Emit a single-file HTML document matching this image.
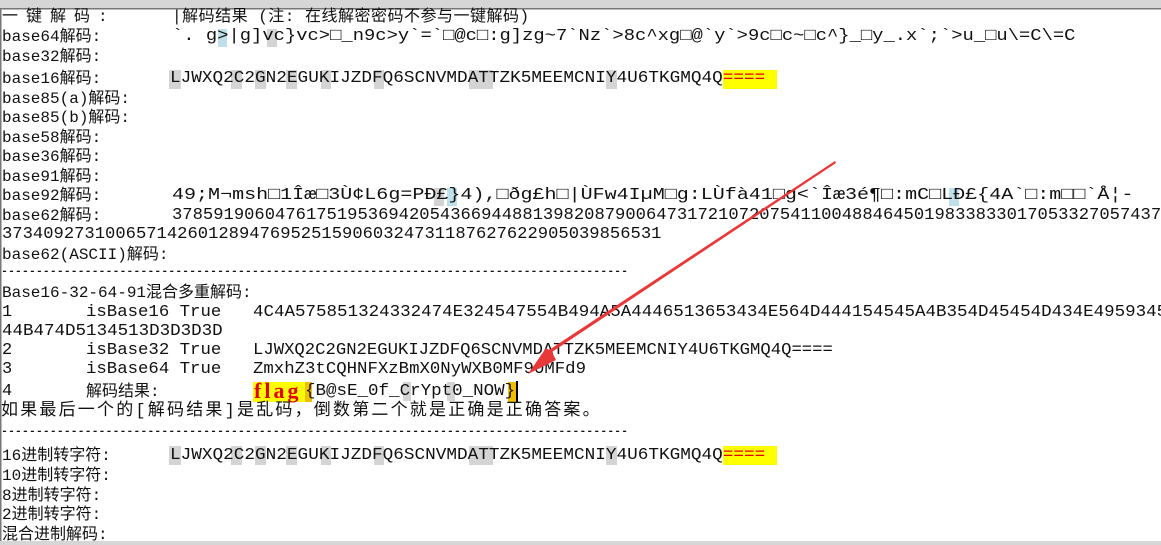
<!DOCTYPE html>
<html><head><meta charset="utf-8"><style>
html,body{margin:0;padding:0;background:#fff;width:1161px;height:545px;overflow:hidden;position:relative}
svg{display:block;position:absolute;left:0;top:0}
.t{position:absolute;white-space:pre;line-height:20px;height:20px;transform-origin:0 0;font-family:"Liberation Mono","Noto Sans CJK SC",monospace;font-size:17px;color:#111}
.l{position:absolute;white-space:pre;line-height:20px;height:20px;font-family:"Liberation Mono","Noto Sans CJK SC",monospace;font-size:16px;color:#111}
.r{color:#e00000}
</style></head><body>
<svg width="1161" height="545" viewBox="0 0 1161 545" xmlns="http://www.w3.org/2000/svg">
<rect x="0" y="0" width="1161" height="8" fill="#d6d6d6"/>
<rect x="0" y="8" width="1161" height="1.5" fill="#777"/>
<rect x="0" y="8" width="1.5" height="537" fill="#777"/>
<rect x="0" y="541" width="1161" height="4" fill="#d6d6d6"/>
<g fill="#d4d4d4">
<rect x="218" y="29" width="9" height="18" fill="#bfe0ea"/>
<rect x="267" y="29" width="10" height="18"/>
<rect x="434" y="188" width="10" height="18"/>
<rect x="447" y="188" width="10" height="18" fill="#bfe0ea"/>
<rect x="949" y="188" width="10" height="18" fill="#bfe0ea"/>
<g id="hb">
<rect x="169" y="70" width="12" height="19"/>
<rect x="231" y="70" width="11" height="19"/>
<rect x="255" y="70" width="11" height="19"/>
<rect x="286" y="70" width="11" height="19"/>
<rect x="321" y="70" width="10" height="19"/>
<rect x="374" y="70" width="10" height="19"/>
<rect x="469" y="70" width="24" height="19"/>
<rect x="606" y="70" width="11" height="19"/>
</g>
<use href="#hb" y="376"/>
<rect x="403" y="382" width="8" height="19"/>
<rect x="447" y="382" width="8" height="19"/>
</g>
<rect x="723" y="70" width="54" height="19" fill="#ffff00"/>
<rect x="723" y="446" width="54" height="19" fill="#ffff00"/>
<rect x="253" y="382" width="52" height="20" fill="#ffff00"/>
<rect x="305" y="382" width="7" height="20" fill="#f0c000"/>
<rect x="508" y="382" width="8" height="20" fill="#f0c000"/>
<rect x="516" y="381" width="2" height="21" fill="#000"/>
</svg>

<div class="l" style="left:2px;top:7px;letter-spacing:8px">一键解码:</div>
<div class="l" style="left:172px;top:7px;letter-spacing:0.5px">|解码结果 (注: 在线解密密码不参与一键解码)</div>
<div class="l" style="left:2px;top:27px">base64解码:</div>
<div class="t" style="left:172px;top:27px;transform:scaleX(1.107)">`. g&gt;|g]vc}vc&gt;□_n9c&gt;y`=`□@c□:g]zg~7`Nz`&gt;8c^xg□@`y`&gt;9c□c~□c^}_□y_.x`;`&gt;u_□u\=C\=C</div>
<div class="l" style="left:2px;top:47px">base32解码:</div>
<div class="l" style="left:2px;top:69px">base16解码:</div>
<div class="t" style="left:170px;top:69px;transform:scaleX(1.042)">LJWXQ2C2GN2EGUKIJZDFQ6SCNVMDATTZK5MEEMCNIY4U6TKGMQ4Q<span class="r">====</span></div>
<div class="l" style="left:2px;top:89px">base85(a)解码:</div>
<div class="l" style="left:2px;top:108px">base85(b)解码:</div>
<div class="l" style="left:2px;top:128px">base58解码:</div>
<div class="l" style="left:2px;top:147px">base36解码:</div>
<div class="l" style="left:2px;top:167px">base91解码:</div>
<div class="l" style="left:2px;top:186px">base92解码:</div>
<div class="t" style="left:172px;top:186px;transform:scaleX(1.178)">49;M¬msh□1Îæ□3Ù¢L6g=PÐ£}4),□ðg£h□|ÙFw4IµM□g:LÙfà41□g&lt;`Îæ3é¶□:mC□LÐ£{4A`□:m□□`Å¦-</div>
<div class="l" style="left:2px;top:206px">base62解码:</div>
<div class="t" style="left:172px;top:206px;transform:scaleX(1.01)">378591906047617519536942054366944881398208790064731721072075411004884645019833833017053327057437</div>
<div class="t" style="left:2px;top:225px;transform:scaleX(1.01)">3734092731006571426012894769525159060324731187627622905039856531</div>
<div class="l" style="left:2px;top:245px">base62(ASCII)解码:</div>
<div class="t" style="left:1px;top:263px;transform:scaleX(0.683)">------------------------------------------------------------------------------------------</div>
<div class="l" style="left:2px;top:283px">Base16-32-64-91混合多重解码:</div>
<div class="t" style="left:2px;top:303px">1</div>
<div class="t" style="left:86px;top:303px;transform:scaleX(1.02)">isBase16 True</div>
<div class="t" style="left:253px;top:303px;transform:scaleX(1.03)">4C4A575851324332474E324547554B494A5A4446513653434E564D444154545A4B354D45454D434E4959345</div>
<div class="t" style="left:2px;top:322px;transform:scaleX(1.03)">44B474D5134513D3D3D3D</div>
<div class="t" style="left:2px;top:341px">2</div>
<div class="t" style="left:86px;top:341px;transform:scaleX(1.02)">isBase32 True</div>
<div class="t" style="left:253px;top:341px;transform:scaleX(1.015)">LJWXQ2C2GN2EGUKIJZDFQ6SCNVMDATTZK5MEEMCNIY4U6TKGMQ4Q====</div>
<div class="t" style="left:2px;top:360px">3</div>
<div class="t" style="left:86px;top:360px;transform:scaleX(1.02)">isBase64 True</div>
<div class="t" style="left:253px;top:360px;transform:scaleX(1.02)">ZmxhZ3tCQHNFXzBmX0NyWXB0MF90MFd9</div>
<div class="t" style="left:2px;top:382px">4</div>
<div class="l" style="left:86px;top:382px">解码结果:</div>
<div class="t r" style="left:254px;top:381px;font-family:'Liberation Serif',serif;font-weight:bold;font-size:22px;letter-spacing:3px">flag</div>
<div class="t" style="left:305px;top:382px;transform:scaleX(1.03)">{B@sE_0f_CrYpt0_NOW}</div>
<div class="l" style="left:1px;top:402px;font-size:17px;letter-spacing:2.2px">如果最后一个的[解码结果]是乱码，倒数第二个就是正确是正确答案。</div>
<div class="t" style="left:1px;top:423px;transform:scaleX(0.683)">------------------------------------------------------------------------------------------</div>
<div class="l" style="left:2px;top:446px">16进制转字符:</div>
<div class="t" style="left:170px;top:446px;transform:scaleX(1.042)">LJWXQ2C2GN2EGUKIJZDFQ6SCNVMDATTZK5MEEMCNIY4U6TKGMQ4Q<span class="r">====</span></div>
<div class="l" style="left:2px;top:466px">10进制转字符:</div>
<div class="l" style="left:2px;top:486px">8进制转字符:</div>
<div class="l" style="left:2px;top:505px">2进制转字符:</div>
<div class="l" style="left:2px;top:525px">混合进制解码:</div>

<svg width="1161" height="545" viewBox="0 0 1161 545" xmlns="http://www.w3.org/2000/svg">
<polygon points="835,161 836,163 552,352 556,360 528,374 546,348 549,350" fill="#e8383a"/>
</svg>
</body></html>
